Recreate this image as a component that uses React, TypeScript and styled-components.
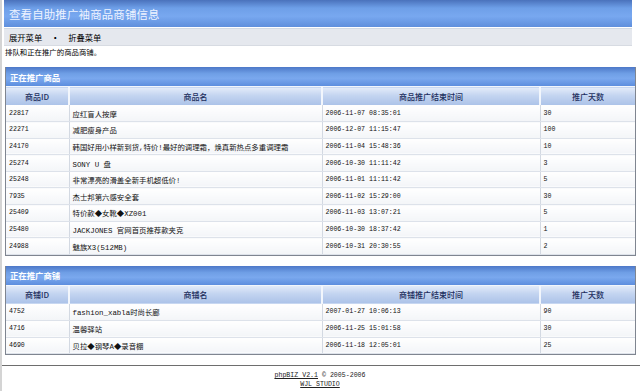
import styled, { createGlobalStyle } from 'styled-components';

const GlobalStyle = createGlobalStyle`
  body {
    margin: 0;
    background: #fff;
    font-family: "Noto Sans CJK SC", "DejaVu Sans", sans-serif;
    color: #111;
  }
`;

interface IProductRow {
    id: string;
    name: string;
    end: string;
    days: string;
}

const products: IProductRow[] = [
    { id: '22817', name: '应红盲人按摩', end: '2006-11-07 08:35:01', days: '30' },
    { id: '22271', name: '减肥瘦身产品', end: '2006-12-07 11:15:47', days: '100' },
    { id: '24170', name: '韩国好用小样新到货,特价!最好的调理霜，焕真新热点多重调理霜', end: '2006-11-04 15:48:36', days: '10' },
    { id: '25274', name: 'SONY U 盘', end: '2006-10-30 11:11:42', days: '3' },
    { id: '25248', name: '非常漂亮的滑盖全新手机超低价!', end: '2006-11-01 11:11:42', days: '5' },
    { id: '7935', name: '杰士邦第六感安全套', end: '2006-11-02 15:29:00', days: '30' },
    { id: '25409', name: '特价款◆女靴◆XZ001', end: '2006-11-03 13:07:21', days: '5' },
    { id: '25480', name: 'JACKJONES 官网首页推荐款夹克', end: '2006-10-30 18:37:42', days: '1' },
    { id: '24988', name: '魅族X3(512MB)', end: '2006-10-31 20:30:55', days: '2' },
];

const shops: IProductRow[] = [
    { id: '4752', name: 'fashion_xabla时尚长廊', end: '2007-01-27 10:06:13', days: '90' },
    { id: '4716', name: '温馨驿站', end: '2006-11-25 15:01:58', days: '30' },
    { id: '4690', name: '贝拉◆钢琴A◆录音棚', end: '2006-11-18 12:05:01', days: '25' },
];

const Section = ({ title, cols, rows }: { title: string; cols: string[]; rows: IProductRow[] }) => (
    <Box>
        <BoxHead>{title}</BoxHead>
        <Table>
            <colgroup>
                <col style={{ width: 63 }} />
                <col style={{ width: 253 }} />
                <col style={{ width: 218 }} />
                <col />
            </colgroup>
            <thead>
                <tr>
                    {cols.map(c => <Th key={c}>{c}</Th>)}
                </tr>
            </thead>
            <tbody>
                {rows.map(r => (
                    <tr key={r.id}>
                        <Td $mono>{r.id}</Td>
                        <Td>{r.name}</Td>
                        <Td $mono>{r.end}</Td>
                        <Td $mono>{r.days}</Td>
                    </tr>
                ))}
            </tbody>
        </Table>
    </Box>
);

const App = () => {
    return (
        <Page>
            <GlobalStyle />
            <TitleBar>查看自助推广袖商品商铺信息</TitleBar>
            <MenuBar>
                <span>展开菜单</span>
                <Dot>•</Dot>
                <span>折叠菜单</span>
            </MenuBar>
            <Intro>排队和正在推广的商品商铺。</Intro>
            <Section title="正在推广商品" cols={['商品ID', '商品名', '商品推广结束时间', '推广天数']} rows={products} />
            <Section title="正在推广商铺" cols={['商铺ID', '商铺名', '商铺推广结束时间', '推广天数']} rows={shops} />
            <Rule />
            <Footer>
                <div><FootLink>phpBIZ V2.1</FootLink> © 2005-2006</div>
                <div><FootLink>WJL STUDIO</FootLink></div>
            </Footer>
        </Page>
    );
}

const Page = styled.div`
  width: 640px;
  height: 391px;
  overflow: hidden;
  border-left: 2px solid #d4d4d4;
  box-sizing: border-box;
  padding-left: 2px;
`

const TitleBar = styled.div`
  width: 628px;
  height: 27px;
  box-sizing: border-box;
  padding-left: 5px;
  display: flex;
  align-items: center;
  background: linear-gradient(#4a72bc 0%, #6e9fe8 30%, #78a8f0 60%, #5f8fdc 100%);
  color: #eef3ff;
  font-size: 11.4px;
  letter-spacing: 0.2px;
`

const MenuBar = styled.div`
  width: 628px;
  height: 18px;
  margin-top: 1px;
  box-sizing: border-box;
  padding-left: 5px;
  display: flex;
  align-items: center;
  gap: 6px;
  background: #e5e8ee;
  border-top: 1px solid #d2dae4;
  border-bottom: 1px solid #d7dbe2;
  font-size: 8.3px;
  color: #000;
`

const Dot = styled.span`
  font-size: 10px;
  margin: 0 2px;
`

const Intro = styled.div`
  height: 12px;
  line-height: 12px;
  padding-left: 1px;
  font-size: 7.4px;
  color: #000;
  margin-bottom: 9px;
`

const Box = styled.div`
  width: 631px;
  margin: 0 0 10px 1px;
  border: 1px solid #7f8590;
  border-top: none;
  box-sizing: border-box;
`

const BoxHead = styled.div`
  height: 19px;
  box-sizing: border-box;
  padding-left: 4px;
  display: flex;
  align-items: center;
  background: linear-gradient(#4d78c8 0%, #6f9fe6 35%, #7aa8ee 60%, #5d8ede 100%);
  color: #fff;
  font-size: 8.4px;
  font-weight: bold;
`

const Table = styled.table`
  width: 100%;
  table-layout: fixed;
  border-collapse: collapse;
`

const Th = styled.th`
  height: 18px;
  padding: 0;
  background: linear-gradient(#e4ecf9 0%, #c3d4f0 45%, #abc2e8 100%);
  border-right: 2px solid #f2f6fc;
  border-top: 1px solid #f2f6fc;
  color: #1d2f5e;
  font-size: 8px;
  font-weight: 500;
  text-align: center;
  &:last-child {
    border-right: none;
  }
`

const Td = styled.td<{ $mono?: boolean }>`
  height: 16.6px;
  padding: 0 0 0 3px;
  box-sizing: border-box;
  background: linear-gradient(#ffffff, #f3f5f8);
  border-bottom: 1px solid #dde2ea;
  border-right: 1px solid #d3d9e2;
  font-size: ${p => (p.$mono ? '6.6px' : '7.4px')};
  font-family: "Liberation Mono", "Noto Sans CJK SC", monospace;
  color: #111;
  white-space: nowrap;
  overflow: hidden;
  &:last-child {
    border-right: none;
  }
`

const Rule = styled.div`
  margin: 0 0 0 -4px;
  width: 640px;
  height: 1px;
  background: #6e6e6e;
`

const Footer = styled.div`
  padding-top: 5px;
  text-align: center;
  font-family: "Liberation Mono", "Noto Sans CJK SC", monospace;
  font-size: 6.6px;
  line-height: 9px;
  color: #222;
  margin-left: -4px;
`

const FootLink = styled.span`
  text-decoration: underline;
`

export default App;
